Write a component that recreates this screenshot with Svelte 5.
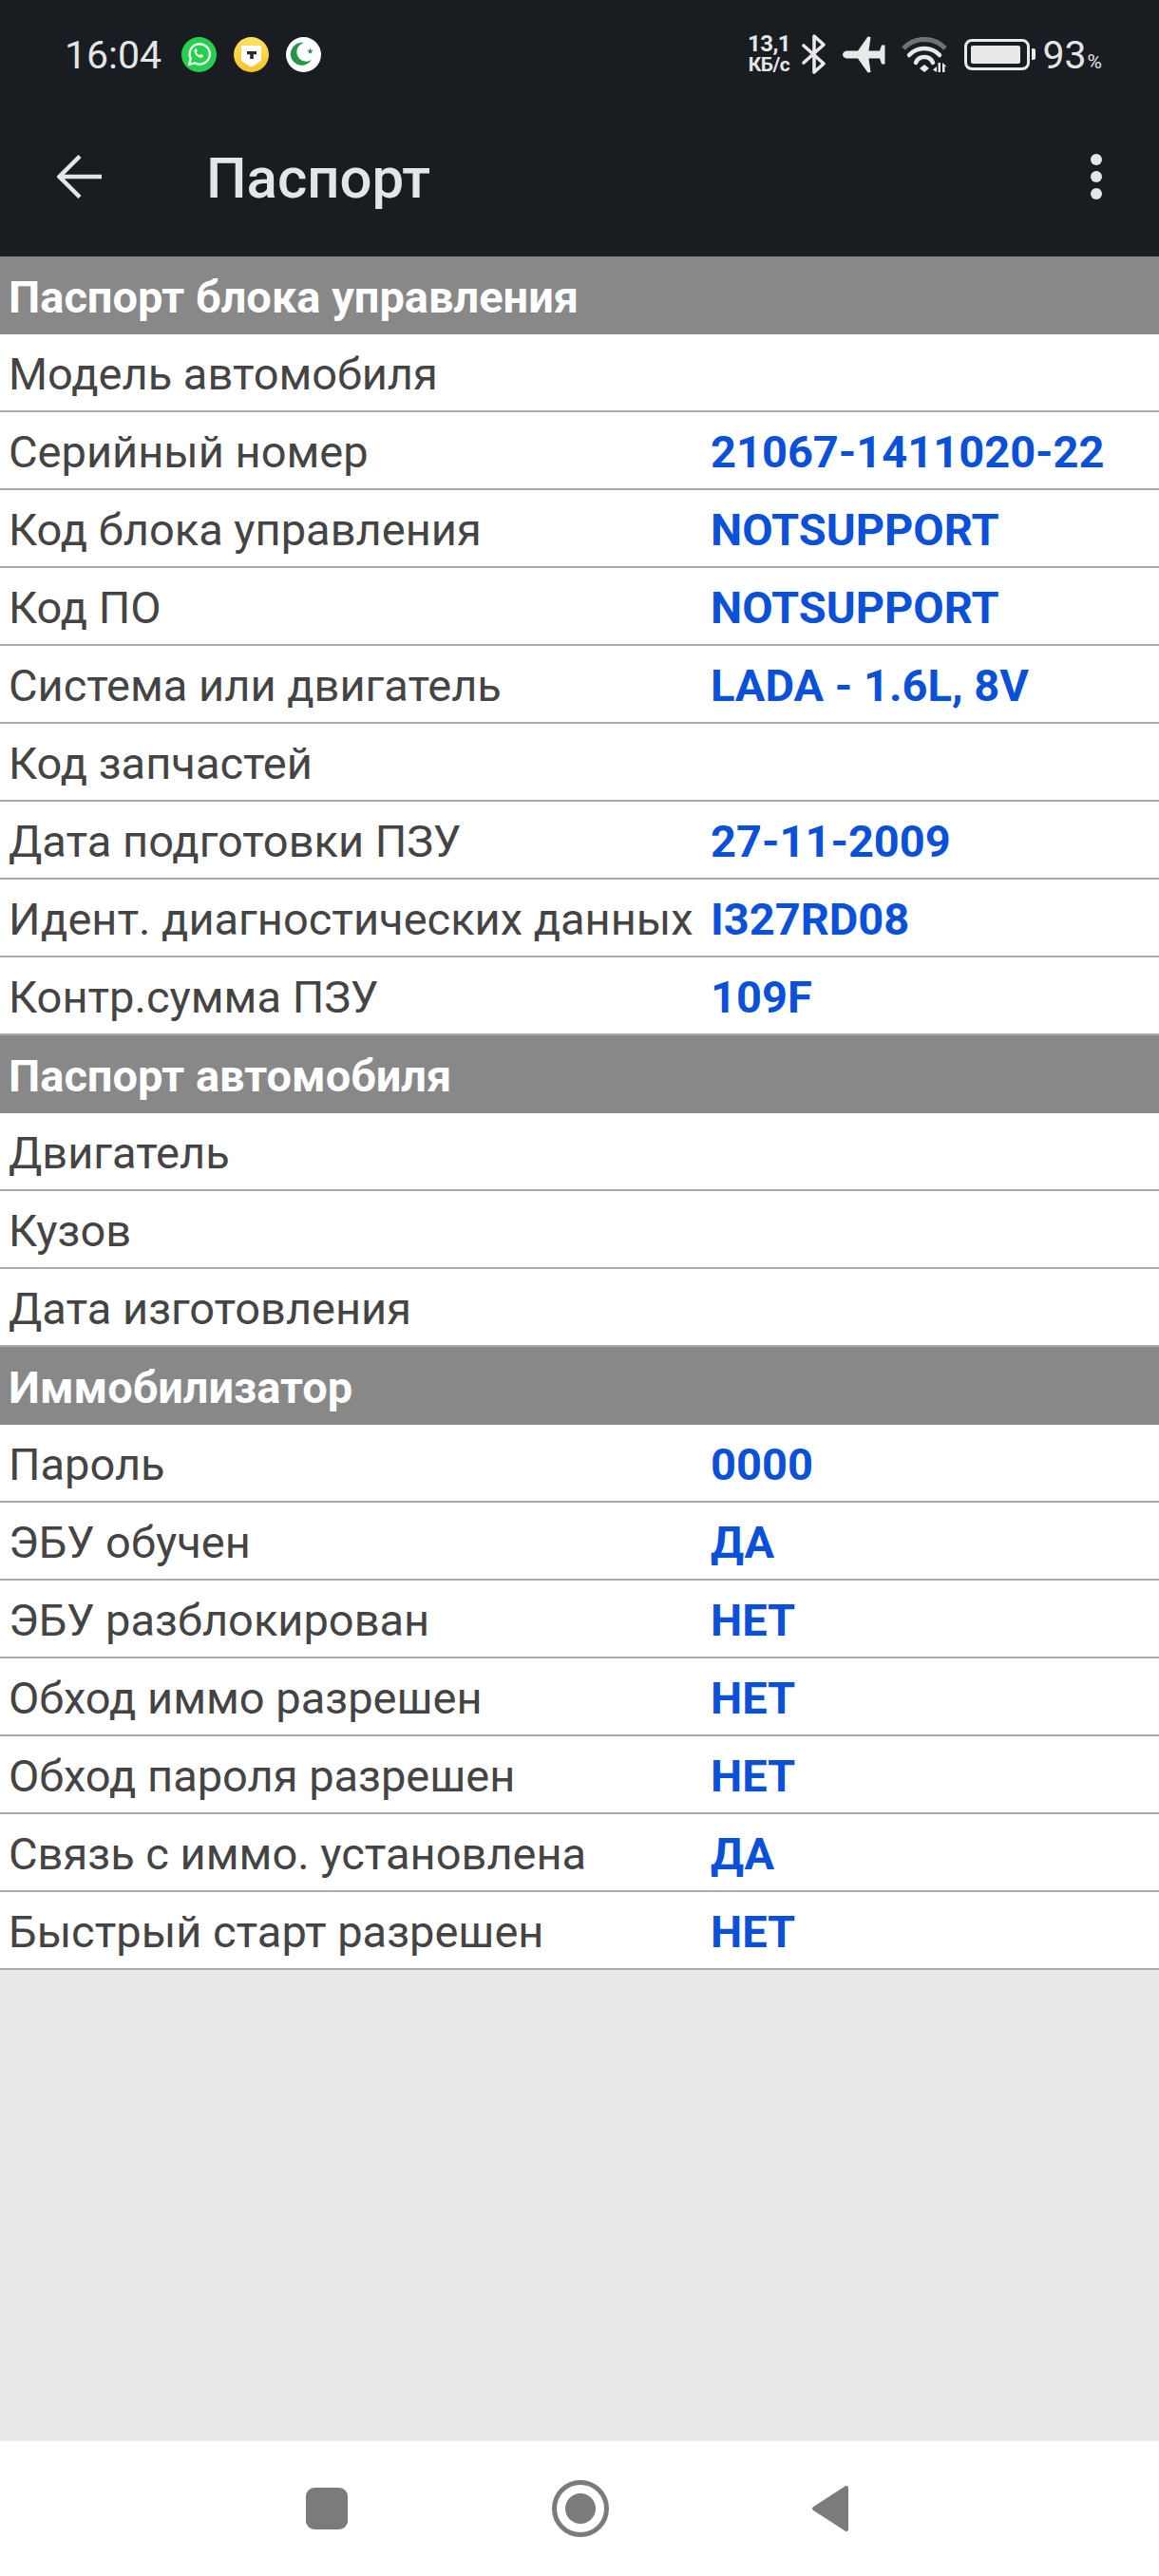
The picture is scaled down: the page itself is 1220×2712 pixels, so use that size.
<script>
  const sections = [
    {
      title: 'Паспорт блока управления',
      rows: [
        ['Модель автомобиля', ''],
        ['Серийный номер', '21067-1411020-22'],
        ['Код блока управления', 'NOTSUPPORT'],
        ['Код ПО', 'NOTSUPPORT'],
        ['Система или двигатель', 'LADA - 1.6L, 8V'],
        ['Код запчастей', ''],
        ['Дата подготовки ПЗУ', '27-11-2009'],
        ['Идент. диагностических данных', 'I327RD08'],
        ['Контр.сумма ПЗУ', '109F'],
      ],
    },
    {
      title: 'Паспорт автомобиля',
      rows: [
        ['Двигатель', ''],
        ['Кузов', ''],
        ['Дата изготовления', ''],
      ],
    },
    {
      title: 'Иммобилизатор',
      rows: [
        ['Пароль', '0000'],
        ['ЭБУ обучен', 'ДА'],
        ['ЭБУ разблокирован', 'НЕТ'],
        ['Обход иммо разрешен', 'НЕТ'],
        ['Обход пароля разрешен', 'НЕТ'],
        ['Связь с иммо. установлена', 'ДА'],
        ['Быстрый старт разрешен', 'НЕТ'],
      ],
    },
  ];
</script>

<div class="screen">
  <header class="top">
    <div class="status">
      <div class="status-left">
        <span class="clock">16:04</span>
        <svg class="app-icon" viewBox="0 0 37 37">
          <circle cx="18.5" cy="18.5" r="18.5" fill="#25d04f" />
          <path d="M8 29l1.800-6.200a10.600 10.600 0 1 1 4.300 4.400z" fill="none" stroke="#fff" stroke-width="2.200" stroke-linejoin="round" />
          <path d="M14.500 12.500c-1.600 1.200-1.400 3.400.4 5.800 2 2.600 4.400 3.900 6.200 3.400 1.300-.4 2-1.500 1.800-2.400l-2.600-1.400-1.200 1.300c-1.400-.5-2.800-1.900-3.400-3.300l1.100-1.200-1.200-2.600z" fill="#fff" />
        </svg>
        <svg class="app-icon" viewBox="0 0 37 37">
          <defs>
            <linearGradient id="gold" x1="0" y1="0" x2="0" y2="1">
              <stop offset="0" stop-color="#ffe263" />
              <stop offset="1" stop-color="#f6c42a" />
            </linearGradient>
          </defs>
          <circle cx="18.500" cy="18.500" r="18.500" fill="url(#gold)" />
          <path d="M8 9h21v16l-9 6h-3l-9-6z" fill="#fff" />
          <path d="M14 15h10v3.300h-3.200V23h-3.600v-4.700H14z" fill="#2b2b2b" />
        </svg>
        <svg class="app-icon" viewBox="0 0 37 37">
          <circle cx="18.500" cy="18.500" r="18.500" fill="#fff" />
          <path d="M19 6A12 12 0 1 0 27 24A10 10 0 1 1 19 6z" fill="#27954a" />
          <path d="M25.500 11.500l.8 2.300 2.400.1-1.900 1.500.7 2.400-2-1.400-2 1.400.7-2.400-1.900-1.500 2.400-.1z" fill="#27954a" />
        </svg>
      </div>
      <div class="status-right">
        <div class="speed"><span>13,1</span><span>КБ/с</span></div>
        <svg class="bt" viewBox="0 0 26 42">
          <path d="M2 12l21 19-10 9V2l10 9L2 30" fill="none" stroke="#e8e9e9" stroke-width="3.600" stroke-linecap="round" stroke-linejoin="round" />
        </svg>
        <svg class="plane" viewBox="0 0 45 39">
          <path d="M0 19.500C0 17.500 2 15.500 5 15.500H16L26.500 0.500l3 .5-2 14.500H39L41 9.500h3.500v20H41l-2-6H27.500l2 14.500-3 .5L16 23.500H5C2 23.500 0 21.500 0 19.500z" fill="#e8e9e9" />
        </svg>
        <svg class="wifi" viewBox="0 0 50 37">
          <path d="M3 12a30 30 0 0 1 44 0" fill="none" stroke="#6f7173" stroke-width="5" />
          <path d="M9 19a21.800 21.800 0 0 1 32 0" fill="none" stroke="#e8e9e9" stroke-width="4.500" stroke-linecap="round" />
          <path d="M16 27a9.800 9.800 0 0 1 18 0" fill="none" stroke="#e8e9e9" stroke-width="4.500" stroke-linecap="round" />
          <path d="M25 29l5 4-5 4-5-4z" fill="#e8e9e9" />
          <path d="M38 31l-4 3.500 4 2.500zM39.500 27H42v10h-2.500zM44 27v10h2.500v-6.500l2.500 1z" fill="#e8e9e9" />
        </svg>
        <div class="battery"><div class="battery-fill"></div></div>
        <div class="battery-nub"></div>
        <span class="percent">93<small>%</small></span>
      </div>
    </div>
    <div class="toolbar">
      <svg class="back" viewBox="0 0 48 46">
        <path d="M47 23H3M24 1.500L2.500 23 24 44.500" fill="none" stroke="#e4e5e5" stroke-width="4.500" />
      </svg>
      <h1>Паспорт</h1>
      <div class="dots"><i></i><i></i><i></i></div>
    </div>
  </header>

  <main>
    {#each sections as section}
      <div class="section-title">{section.title}</div>
      {#each section.rows as [label, value]}
        <div class="row">
          <span class="label">{label}</span>
          <span class="value">{value}</span>
        </div>
      {/each}
    {/each}
  </main>

  <nav>
    <div class="nav-square"></div>
    <div class="nav-home"><div></div></div>
    <svg class="nav-back" viewBox="0 0 40 50">
      <path d="M37 3L3 25l34 22z" fill="#7b7b7b" stroke="#7b7b7b" stroke-width="4" stroke-linejoin="round" />
    </svg>
  </nav>
</div>

<style>
  :global(body) {
    margin: 0;
    background: #e8e8e8;
  }

  .screen {
    width: 1220px;
    height: 2712px;
    display: flex;
    flex-direction: column;
    font-family: Roboto, "Noto Sans", sans-serif;
  }

  .top {
    height: 270px;
    flex-shrink: 0;
    background: #191c21;
    color: #e4e5e5;
  }

  .status {
    height: 114px;
    display: flex;
    justify-content: space-between;
    align-items: center;
    padding: 0 60px 0 68px;
  }

  .status-left,
  .status-right {
    display: flex;
    align-items: center;
  }

  .clock {
    font-size: 41px;
    width: 123px;
    padding-top: 2px;
  }

  .app-icon {
    width: 37px;
    height: 37px;
    margin-right: 18px;
  }

  .speed {
    display: flex;
    flex-direction: column;
    align-items: center;
    font-weight: 700;
    line-height: 22px;
    font-size: 24px;
    width: 46px;
    letter-spacing: -0.5px;
  }

  .speed span + span {
    font-size: 21px;
  }

  .bt {
    width: 26px;
    height: 42px;
    margin-left: 11px;
  }

  .plane {
    width: 45px;
    height: 39px;
    margin-left: 17px;
  }

  .wifi {
    width: 50px;
    height: 37px;
    margin-left: 16px;
  }

  .battery {
    width: 69px;
    height: 33px;
    margin-left: 17px;
    box-sizing: border-box;
    border: 3px solid #e8e9e9;
    border-radius: 8px;
    padding: 4px;
  }

  .battery-fill {
    width: 52px;
    height: 100%;
    background: #e8e9e9;
    border-radius: 2px;
  }

  .battery-nub {
    width: 4px;
    height: 12px;
    margin-left: 2px;
    background: #e8e9e9;
    border-radius: 0 2px 2px 0;
  }

  .percent {
    font-size: 41px;
    margin-left: 8px;
    padding-top: 2px;
  }

  .percent small {
    font-size: 21px;
    margin-left: 1px;
  }

  .toolbar {
    height: 144px;
    display: flex;
    align-items: center;
    padding: 0 60px;
  }

  .back {
    width: 48px;
    height: 46px;
    margin-right: 109px;
  }

  h1 {
    flex: 1;
    margin: 0;
    padding-top: 3px;
    font-size: 60px;
    font-weight: 500;
  }

  .dots {
    display: flex;
    flex-direction: column;
    gap: 6px;
  }

  .dots i {
    display: block;
    width: 12px;
    height: 12px;
    border-radius: 50%;
    background: #e4e5e5;
  }

  main {
    flex: 1;
  }

  .section-title {
    height: 82px;
    box-sizing: border-box;
    padding: 2px 0 0 9px;
    display: flex;
    align-items: center;
    background: #888;
    color: #fff;
    font-size: 47px;
    font-weight: 700;
  }

  .row {
    height: 82px;
    box-sizing: border-box;
    padding: 2px 0 0 9px;
    display: flex;
    align-items: center;
    background: #fff;
    border-bottom: 2px solid #aaa;
    font-size: 47px;
  }

  .label {
    width: 739px;
    flex-shrink: 0;
    color: #444;
    white-space: nowrap;
  }

  .value {
    color: #0b50d8;
    font-weight: 700;
  }

  nav {
    height: 142px;
    flex-shrink: 0;
    background: #fff;
    display: flex;
    align-items: center;
    padding-left: 322px;
  }

  .nav-square {
    width: 44px;
    height: 44px;
    border-radius: 9px;
    background: #7b7b7b;
  }

  .nav-home {
    width: 60px;
    height: 60px;
    margin-left: 215px;
    box-sizing: border-box;
    border: 5px solid #7b7b7b;
    border-radius: 50%;
    display: flex;
    align-items: center;
    justify-content: center;
  }

  .nav-home div {
    width: 32px;
    height: 32px;
    border-radius: 50%;
    background: #7b7b7b;
  }

  .nav-back {
    width: 40px;
    height: 50px;
    margin-left: 213px;
  }
</style>
